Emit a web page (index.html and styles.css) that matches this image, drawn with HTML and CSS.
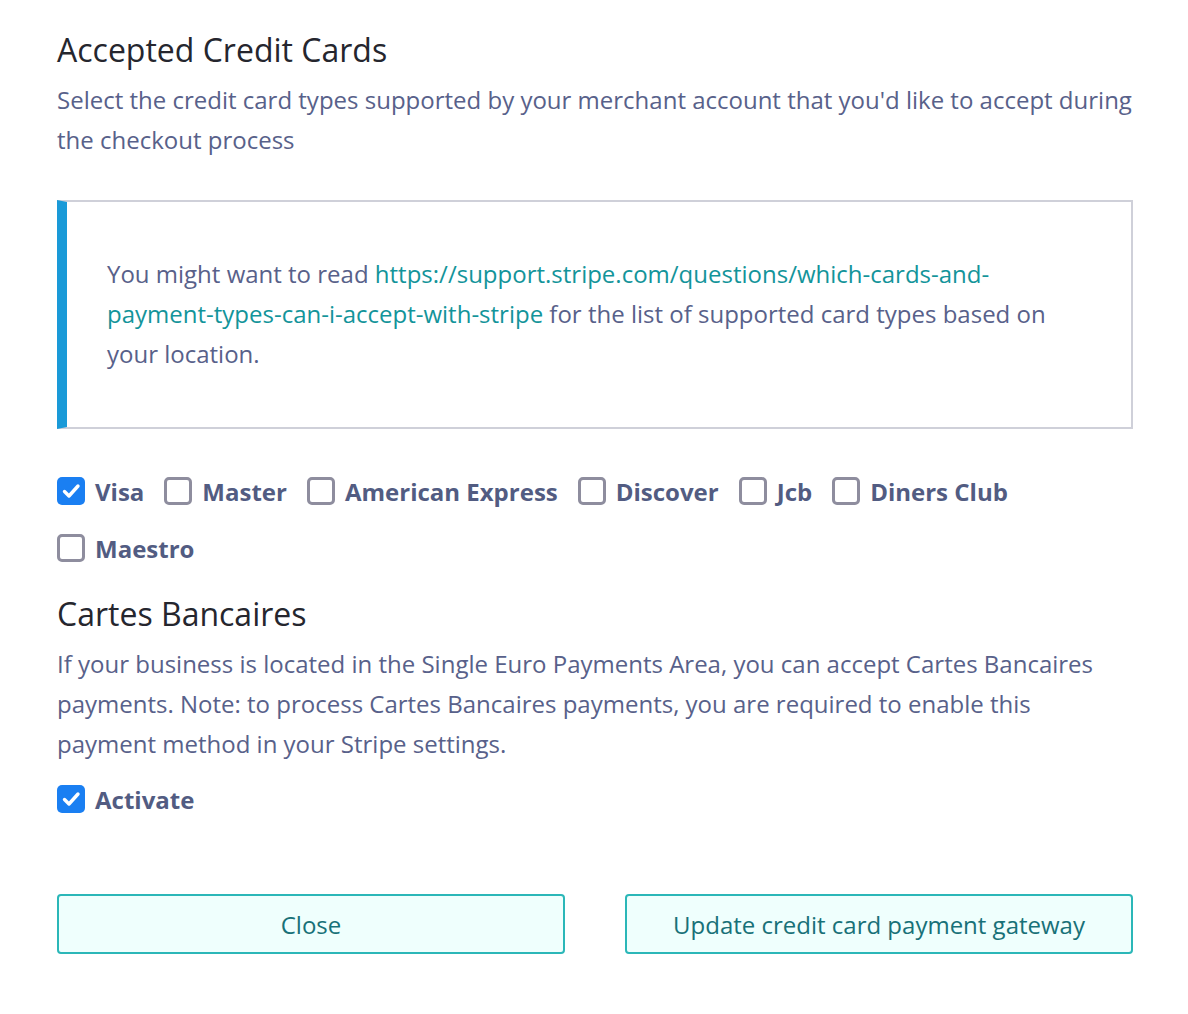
FILE: index.html
```html
<!DOCTYPE html>
<html>
<head>
<meta charset="utf-8">
<link rel="stylesheet" href="styles.css">
</head>
<body>
<div class="panel">
  <h2 class="title">Accepted Credit Cards</h2>
  <p class="text">Select the credit card types supported by your merchant account that you'd like to accept during the checkout process</p>

  <div class="callout">
    <p class="text">You might want to read <a class="link" href="#">https://support.stripe.com/questions/which-cards-and-payment-types-can-i-accept-with-stripe</a> for the list of supported card types based on your location.</p>
  </div>

  <div class="cards">
    <label class="check"><span class="box on"><svg viewBox="0 0 28 28" width="28" height="28"><path d="M7.5 14.5l4.5 4.5 9-10" fill="none" stroke="#fff" stroke-width="3.4" stroke-linecap="round" stroke-linejoin="round"/></svg></span><span class="lbl">Visa</span></label>
    <label class="check"><span class="box"></span><span class="lbl">Master</span></label>
    <label class="check"><span class="box"></span><span class="lbl">American Express</span></label>
    <label class="check"><span class="box"></span><span class="lbl">Discover</span></label>
    <label class="check"><span class="box"></span><span class="lbl">Jcb</span></label>
    <label class="check"><span class="box"></span><span class="lbl">Diners Club</span></label>
    <label class="check"><span class="box"></span><span class="lbl">Maestro</span></label>
  </div>

  <h2 class="title sub">Cartes Bancaires</h2>
  <p class="text">If your business is located in the Single Euro Payments Area, you can accept Cartes Bancaires payments. Note: to process Cartes Bancaires payments, you are required to enable this payment method in your Stripe settings.</p>
  <div class="cards single">
    <label class="check"><span class="box on"><svg viewBox="0 0 28 28" width="28" height="28"><path d="M7.5 14.5l4.5 4.5 9-10" fill="none" stroke="#fff" stroke-width="3.4" stroke-linecap="round" stroke-linejoin="round"/></svg></span><span class="lbl">Activate</span></label>
  </div>

  <div class="actions">
    <button class="btn">Close</button>
    <button class="btn">Update credit card payment gateway</button>
  </div>
</div>
</body>
</html>
```
FILE: styles.css
```css
html, body {
  margin: 0;
  padding: 0;
  background: #ffffff;
}
.panel {
  font-family: "Open Sans", "Noto Sans", sans-serif;
  padding: 30px 55px 0 57px;
  width: 1076px;
}
.title {
  margin: 0;
  font-size: 32px;
  line-height: 40px;
  font-weight: 400;
  color: #25262e;
}
.text {
  margin: 10px 0 0;
  font-size: 24px;
  line-height: 40px;
  color: #58618a;
}
.link {
  color: #13949a;
  text-decoration: none;
}
.callout {
  margin-top: 40px;
  border: 2px solid #cfd0d9;
  border-left: 10px solid #1a9ad8;
  padding: 52px 40px 53px 40px;
}
.callout .text {
  margin: 0;
}
.cards {
  display: flex;
  flex-wrap: wrap;
  column-gap: 20px;
  row-gap: 27px;
  margin-top: 47px;
  margin-bottom: 31px;
}
.cards.single {
  margin-top: 20px;
  margin-bottom: 0;
}
.check {
  display: flex;
  align-items: center;
  gap: 10px;
  height: 30px;
}
.box {
  box-sizing: border-box;
  width: 28px;
  height: 28px;
  border: 3px solid #8e8d9e;
  border-radius: 5px;
  display: flex;
  align-items: center;
  justify-content: center;
  overflow: hidden;
}
.box.on {
  background: #1a7ff2;
  border: none;
}
.lbl {
  font-size: 24px;
  font-weight: 700;
  color: #525c82;
}
.actions {
  display: flex;
  gap: 60px;
  margin-top: 80px;
}
.btn {
  flex: 1;
  height: 60px;
  background: #effffd;
  border: 2px solid #2bb7b8;
  border-radius: 4px;
  font-family: "Open Sans", "Noto Sans", sans-serif;
  font-size: 24px;
  color: #187178;
}
```
